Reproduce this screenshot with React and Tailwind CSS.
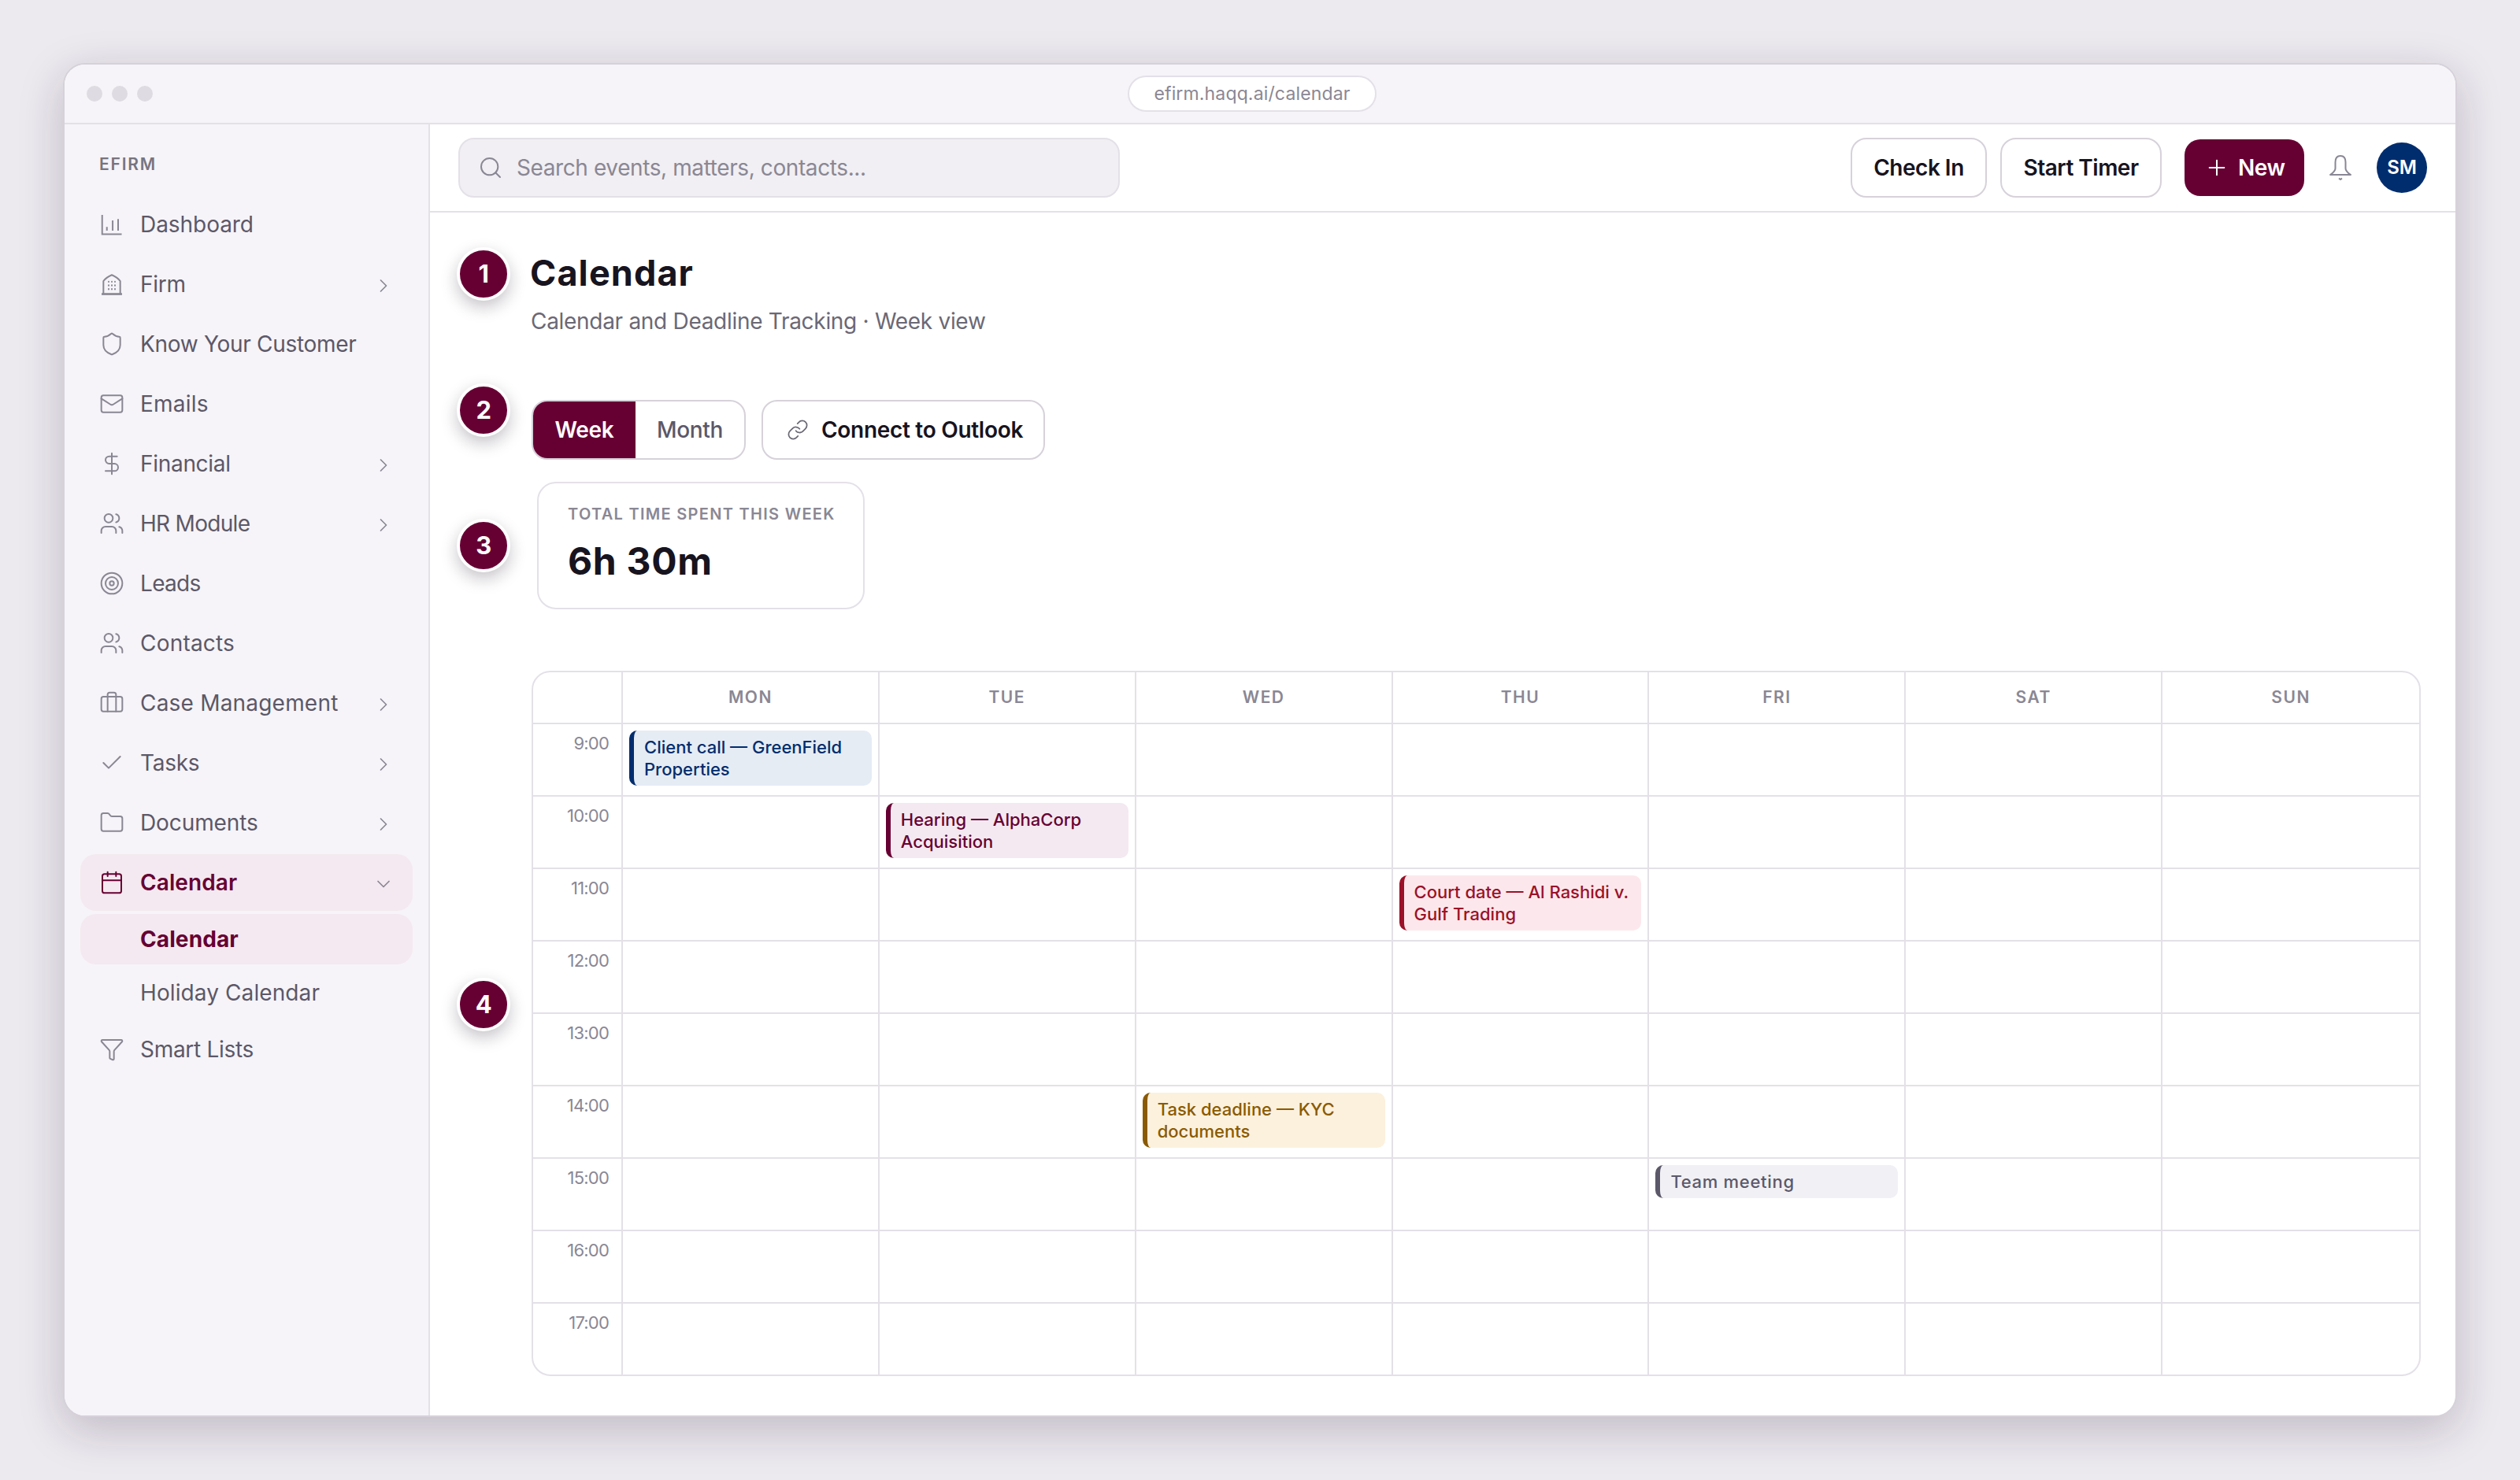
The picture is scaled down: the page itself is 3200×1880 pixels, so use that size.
import React from "react";
import {
  Shield, Mail, DollarSign, Users, Target, Briefcase, Check, Folder, Calendar, Funnel,
  ChevronRight, ChevronDown, Search, Plus, Link,
} from "lucide-react";

const DashIcon = (p) => (
  <svg viewBox="0 0 24 24" fill="none" stroke="currentColor" strokeWidth="1.5" {...p}>
    <path d="M2.8 3V21.3H21.4" />
    <path d="M7.3 14.5V18M12.8 8.3V18M18 7V18" />
  </svg>
);
const FirmIcon = (p) => (
  <svg viewBox="0 0 24 24" fill="none" stroke="currentColor" strokeWidth="1.5" {...p}>
    <path d="M4 21V9C6 6.5 9 4.5 12 3.2C15 4.5 18 6.5 20 9V21" />
    <path d="M2.3 21.4H21.7" strokeWidth="2" />
    <path strokeLinecap="round" d="M9 9.5v.3M12 9.5v.3M15 9.5v.3M9 13v.3M12 13v.3M15 13v.3M9 16.5v.3M12 16.5v.3M15 16.5v.3" />
  </svg>
);
const BellIcon = (p) => (
  <svg viewBox="0 0 32 32" fill="none" stroke="currentColor" strokeWidth="2" {...p}>
    <path d="M16 1C11.5 1 9.5 4.5 9.5 9V17C9.5 20 7.5 22 3 25H29C24.5 22 22.5 20 22.5 17V9C22.5 4.5 20.5 1 16 1Z" strokeLinejoin="round" />
    <path d="M14 29.5L16 31L18 29.5" />
  </svg>
);

const nav = [
  { label: "Dashboard", icon: DashIcon, tr: "tracking-[-0.05px]" },
  { label: "Firm", icon: FirmIcon, chev: true },
  { label: "Know Your Customer", icon: Shield },
  { label: "Emails", icon: Mail, tr: "tracking-[0.2px]" },
  { label: "Financial", icon: DollarSign, chev: true },
  { label: "HR Module", icon: Users, chev: true, tr: "tracking-[-0.7px]" },
  { label: "Leads", icon: Target, tr: "tracking-[-0.7px]" },
  { label: "Contacts", icon: Users, tr: "tracking-[0.2px]" },
  { label: "Case Management", icon: Briefcase, chev: true, tr: "tracking-[0.2px]" },
  { label: "Tasks", icon: Check, chev: true },
  { label: "Documents", icon: Folder, chev: true, tr: "tracking-[-0.1px]" },
];

const tones = {
  blue: "bg-[#e6ecf4] border-[#002d6e] text-[#002d6e] tracking-normal",
  wine: "bg-[#f4e9f0] border-[#660033] text-[#660033] tracking-normal",
  red: "bg-[#fce8ec] border-[#9b1128] text-[#9b1128] tracking-normal",
  amber: "bg-[#fcf1dd] border-[#8a5a00] text-[#8a5a00] tracking-normal",
  gray: "bg-[#f1f0f4] border-[#5c586a] text-[#5c586a] tracking-[0.7px]",
};

const times = ["9:00", "10:00", "11:00", "12:00", "13:00", "14:00", "15:00", "16:00", "17:00"];
const days = ["MON", "TUE", "WED", "THU", "FRI", "SAT", "SUN"];
const events = {
  "0-0": { t: "Client call — GreenField Properties", c: "blue" },
  "1-1": { t: "Hearing — AlphaCorp Acquisition", c: "wine" },
  "2-3": { t: "Court date — Al Rashidi v. Gulf Trading", c: "red" },
  "5-2": { t: "Task deadline — KYC documents", c: "amber" },
  "6-4": { t: "Team meeting", c: "gray" },
};

function Badge({ n, top }) {
  return (
    <div
      className="absolute left-[34px] w-[68px] h-[68px] rounded-full bg-[#660033] border-4 border-white flex items-center justify-center text-white text-[31px] font-bold shadow-[0_8px_20px_rgba(30,20,40,0.25)]"
      style={{ top }}
    >
      {n}
    </div>
  );
}

function NavRow({ item }) {
  const Icon = item.icon;
  return (
    <div className="h-[72px] px-6 flex items-center gap-5 text-[#5c5868] text-[28px] rounded-[20px]">
      <Icon className="w-8 h-8 text-[#8a8794] shrink-0" strokeWidth={1.5} />
      <span className={`flex-1 ${item.tr || ""}`}>{item.label}</span>
      {item.chev && <ChevronRight className="w-7 h-7 text-[#8a8794] mt-[3px] translate-x-[1px]" strokeWidth={1.5} />}
    </div>
  );
}

export default function App() {
  return (
    <div className="w-[3200px] h-[1880px] bg-[#ece9ef] pt-20 pl-20 font-['Inter',sans-serif] tracking-[-0.3px] overflow-hidden">
      <div className="w-[3040px] h-[1720px] bg-white rounded-[28px] border-2 border-[#d6d1da] overflow-hidden flex flex-col shadow-[0_16px_56px_rgba(40,25,50,0.22)]">
        <div className="h-[76px] shrink-0 bg-[#f6f4f8] border-b-2 border-[#e4e0e8] flex items-center pl-7">
          <div className="flex gap-3">
            <span className="w-5 h-5 rounded-full bg-[#dedbe2]" />
            <span className="w-5 h-5 rounded-full bg-[#dedbe2]" />
            <span className="w-5 h-5 rounded-full bg-[#dedbe2]" />
          </div>
          <div className="ml-[1238px] w-[316px] h-[46px] rounded-full bg-white border-2 border-[#e4e0e8] flex items-center justify-center text-[23px] tracking-[0.15px] text-[#8a8794]">
            efirm.haqq.ai/calendar
          </div>
        </div>
        <div className="flex-1 flex min-h-0">
          <aside className="w-[464px] shrink-0 bg-[#f6f4f8] border-r-2 border-[#e4e0e8] px-5 pt-[36px]">
            <div className="px-6 h-[60px] text-[21px] font-semibold tracking-[1.8px] text-[#77747f] leading-[30px]">EFIRM</div>
            <div className="flex flex-col gap-1 mt-[-5px]">
              {nav.map((n) => (
                <NavRow key={n.label} item={n} />
              ))}
              <div className="h-[72px] px-6 flex items-center gap-5 text-[#660033] text-[28px] font-semibold rounded-[20px] bg-[#f4e9f0]">
                <Calendar className="w-8 h-8 shrink-0" strokeWidth={1.5} />
                <span className="flex-1 tracking-[0.1px]">Calendar</span>
                <ChevronDown className="w-7 h-7 text-[#8a8794] mt-[3px] translate-x-[1px]" strokeWidth={1.5} />
              </div>
              <div className="h-16 pl-[76px] flex items-center text-[#660033] text-[28px] font-bold tracking-[0.1px] rounded-[20px] bg-[#f4e9f0]">Calendar</div>
              <div className="h-16 pl-[76px] flex items-center text-[#5c5868] text-[28px] tracking-[0.1px]">Holiday Calendar</div>
              <NavRow item={{ label: "Smart Lists", icon: Funnel }} />
            </div>
          </aside>
          <div className="flex-1 flex flex-col min-w-0">
            <header className="h-[112px] shrink-0 border-b-2 border-[#e4e0e8] flex items-center px-9">
              <div className="w-[840px] h-[76px] rounded-[20px] bg-[#f1eff3] border-2 border-[#e4e0e8] flex items-center pl-[23px] gap-4">
                <Search className="w-8 h-8 text-[#8a8794]" strokeWidth={1.5} />
                <span className="text-[28px] tracking-[-0.4px] text-[#8a8794] translate-x-[1px]">Search events, matters, contacts...</span>
              </div>
              <div className="ml-auto flex items-center">
                <button className="w-[173px] h-[76px] rounded-[20px] bg-white border-2 border-[#d6d1da] text-[28px] font-semibold tracking-[-0.5px] text-[#17141f]">Check In</button>
                <button className="ml-[17px] w-[205px] h-[76px] rounded-[20px] bg-white border-2 border-[#d6d1da] text-[28px] font-semibold tracking-[-0.5px] text-[#17141f]">Start Timer</button>
                <button className="ml-[29px] w-[152px] h-[72px] rounded-[20px] bg-[#660033] text-[28px] font-semibold tracking-[-0.5px] text-white flex items-center pl-[25px] gap-[11px]">
                  <Plus className="w-8 h-8" strokeWidth={1.5} />
                  New
                </button>
                <BellIcon className="ml-[30px] w-8 h-8 text-[#8a8794]" />
                <div className="ml-[30px] w-16 h-16 rounded-full bg-[#002d6e] text-white text-[24px] font-semibold flex items-center justify-center tracking-normal">SM</div>
              </div>
            </header>
            <main className="relative flex-1 pl-[129px] pt-[49px]">
              <Badge n="1" top={44} />
              <Badge n="2" top={217} />
              <Badge n="3" top={389} />
              <Badge n="4" top={972} />
              <h1 className="text-[45px] leading-[56px] font-bold text-[#17141f] tracking-[1.1px] -ml-[2px]">Calendar</h1>
              <p className="mt-[13px] text-[28px] leading-[40px] text-[#6b6875] -ml-[1px]">Calendar and Deadline Tracking · Week view</p>
              <div className="mt-[80px] flex gap-5 h-[76px]">
                <div className="w-[272px] rounded-[20px] border-2 border-[#d6d1da] overflow-hidden flex">
                  <div className="w-[130px] bg-[#660033] text-white text-[28px] font-semibold flex items-center justify-center">Week</div>
                  <div className="flex-1 text-[#5c5868] text-[28px] font-medium flex items-center justify-center">Month</div>
                </div>
                <div className="w-[360px] rounded-[20px] border-2 border-[#d6d1da] flex items-center pl-[30px] gap-[16px] text-[28px] font-semibold text-[#17141f]">
                  <Link className="w-7 h-7 text-[#6b6875]" strokeWidth={1.5} />
                  Connect to Outlook
                </div>
              </div>
              <div className="mt-[28px] ml-[7px] w-[416px] h-[162px] rounded-[24px] border-2 border-[#e4e0e8] pl-[37px] pt-[25px]">
                <div className="text-[20px] leading-[28px] font-semibold tracking-[1.3px] text-[#8a8794] whitespace-nowrap">TOTAL TIME SPENT THIS WEEK</div>
                <div className="mt-[16px] text-[48px] leading-[60px] font-bold text-[#17141f] tracking-[0.7px]">6h 30m</div>
              </div>
              <div className="mt-[78px] w-[2399px] rounded-[24px] border-2 border-[#e4e0e8] overflow-hidden">
                <div className="grid grid-cols-[114px_repeat(7,1fr)] h-[66px] border-b-2 border-[#e4e0e8]">
                  <div className="border-r-2 border-[#e4e0e8]" />
                  {days.map((d, i) => (
                    <div key={d} className={`flex items-center justify-center text-[21px] font-semibold tracking-[1.5px] text-[#8a8794] ${i < 6 ? "border-r-2 border-[#e4e0e8]" : ""}`}>{d}</div>
                  ))}
                </div>
                {times.map((t, r) => (
                  <div key={t} className={`grid grid-cols-[114px_repeat(7,1fr)] ${r < 8 ? "h-[92px] border-b-2 border-[#e4e0e8]" : "h-[90px]"}`}>
                    <div className="border-r-2 border-[#e4e0e8] text-right pr-4 pt-[9px] text-[22px] leading-[30px] text-[#8a8794] tracking-[-0.8px]">{t}</div>
                    {days.map((d, c) => {
                      const e = events[`${r}-${c}`];
                      return (
                        <div key={d} className={`p-2 ${c < 6 ? "border-r-2 border-[#e4e0e8]" : ""}`}>
                          {e && (
                            <div className={`rounded-[10px] border-l-[6px] pl-[13px] pr-2 py-[7px] text-[22px] leading-[28px] font-medium ${tones[e.c]}`}>{e.t}</div>
                          )}
                        </div>
                      );
                    })}
                  </div>
                ))}
              </div>
            </main>
          </div>
        </div>
      </div>
    </div>
  );
}
